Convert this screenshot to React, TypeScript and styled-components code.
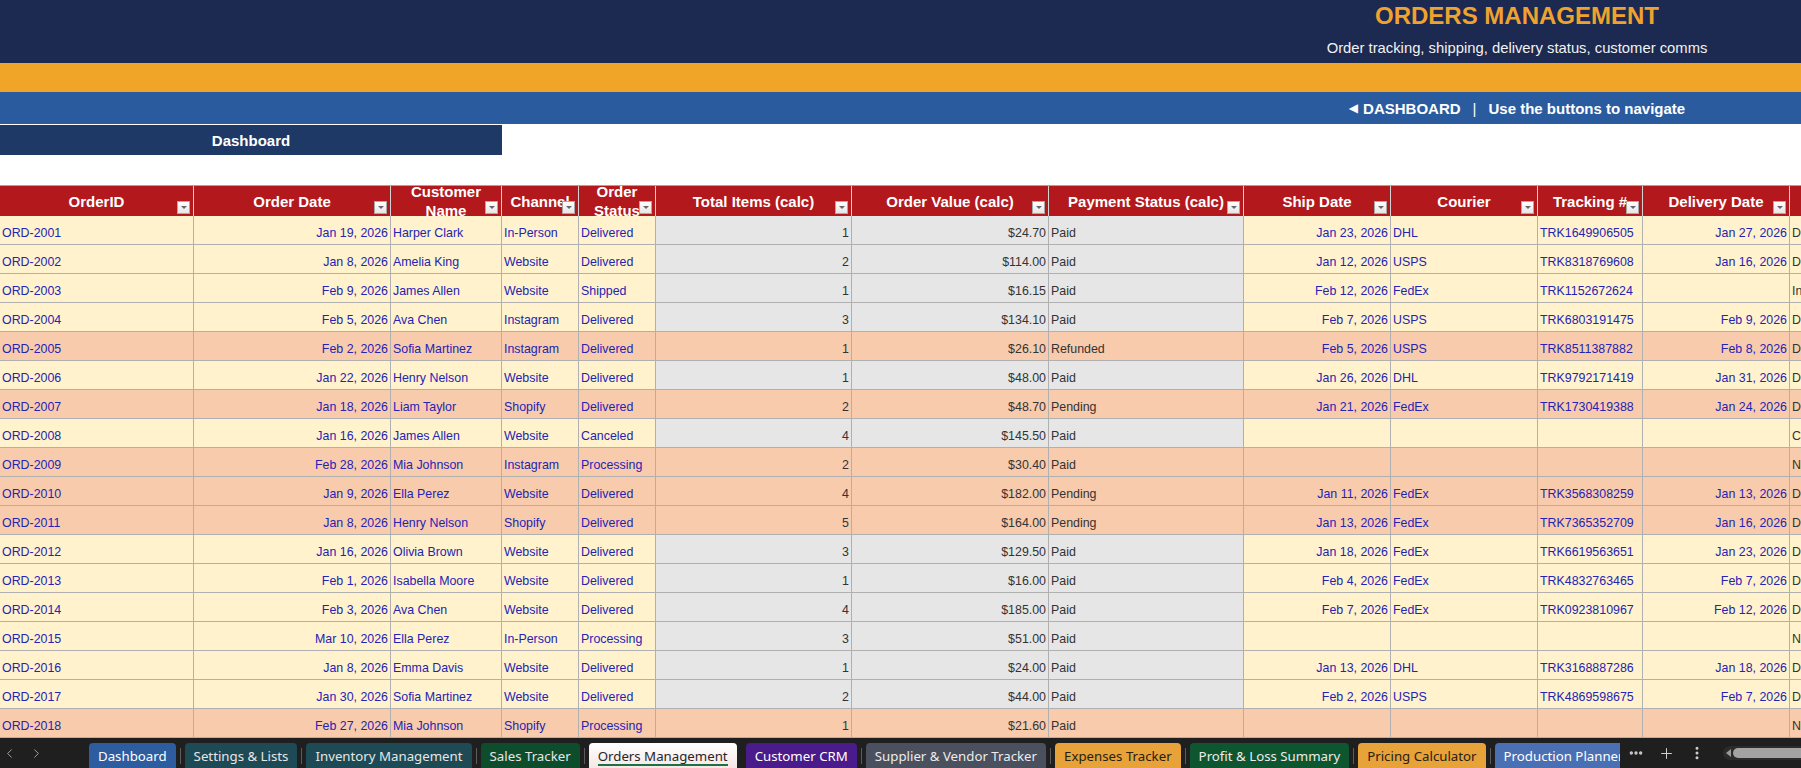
import React from "react";
import styled, { createGlobalStyle } from "styled-components";
import { ChevronLeft, ChevronRight, Plus, Ellipsis, EllipsisVertical } from "lucide-react";

// same column widths for banner, header and rows so merged cells line up
const COLS = "194px 197px 111px 77px 77px 196px 197px 195px 147px 147px 105px 147px 140px";

const GlobalStyle = createGlobalStyle`
  html, body {
    margin: 0;
    padding: 0;
    background: #ffffff;
    overflow: hidden;
  }
  body {
    font-family: "Liberation Sans", Arial, sans-serif;
  }
  * {
    box-sizing: border-box;
  }
`;

const Page = styled.div`
  width: 1801px;
  height: 768px;
  display: flex;
  flex-direction: column;
  overflow: hidden;
`;

const Band = styled.div<{ $bg: string; $h: number }>`
  display: grid;
  grid-template-columns: ${COLS};
  width: max-content;
  height: ${(p) => p.$h}px;
  background: ${(p) => p.$bg};
  flex-shrink: 0;
`;

const Merged = styled.div`
  grid-column: 9 / 13;
  display: flex;
  flex-direction: column;
  align-items: center;
  justify-content: center;
`;

const Title = styled.div`
  height: 32px;
  display: flex;
  align-items: center;
  font-size: 24px;
  font-weight: 700;
  color: #f0a22e;
`;

const Subtitle = styled.div`
  height: 31px;
  display: flex;
  align-items: center;
  font-size: 14.8px;
  color: #f2f2f2;
`;

const NavText = styled.div`
  display: flex;
  align-items: center;
  font-size: 15px;
  font-weight: 700;
  color: #ffffff;
  white-space: nowrap;
`;

const Arrow = styled.span`
  font-family: "DejaVu Sans", sans-serif;
  font-size: 12px;
  margin-right: 5px;
`;

const Pipe = styled.span`
  font-weight: 400;
  margin: 0 12px;
`;

const DashRow = styled(Band)`
  padding-top: 1px;
  margin-bottom: 30px;
`;

const DashCell = styled.div`
  grid-column: 1 / 4;
  background: #1f3966;
  color: #ffffff;
  font-size: 15px;
  font-weight: 700;
  display: flex;
  align-items: center;
  justify-content: center;
`;

const HeadRow = styled.div`
  display: grid;
  grid-template-columns: ${COLS};
  width: max-content;
  height: 31px;
  flex-shrink: 0;
  background: #b3181d;
  border-top: 1px solid #a3a3a3;
`;

const HeadCell = styled.div`
  position: relative;
  overflow: hidden;
  display: flex;
  align-items: center;
  justify-content: center;
  text-align: center;
  padding: 0 2px;
  color: #ffffff;
  font-size: 15px;
  font-weight: 700;
  line-height: 19px;
  border-right: 1px solid #d3d3d3;
`;

const FilterButton = styled.span`
  position: absolute;
  right: 3px;
  bottom: 2px;
  width: 13px;
  height: 13px;
  background: linear-gradient(#ffffff, #e6e6e6);
  border: 1px solid #a8a8a8;
  display: flex;
  align-items: center;
  justify-content: center;

  &::after {
    content: "";
    border-left: 3px solid transparent;
    border-right: 3px solid transparent;
    border-top: 3px solid #666666;
  }
`;

const Row = styled.div`
  display: grid;
  grid-template-columns: ${COLS};
  width: max-content;
  height: 29px;
  flex-shrink: 0;
`;

const Cell = styled.div<{ $bg: string; $fg: string; $right?: boolean }>`
  display: flex;
  align-items: center;
  justify-content: ${(p) => (p.$right ? "flex-end" : "flex-start")};
  padding: 6px 2px 0;
  background: ${(p) => p.$bg};
  color: ${(p) => p.$fg};
  font-size: 12.4px;
  white-space: nowrap;
  overflow: hidden;
  border-right: 1px solid #b0b0b0;
  border-bottom: 1px solid #b0b0b0;
`;

const TabBar = styled.div`
  height: 30px;
  flex-shrink: 0;
  background: #1f1f1f;
  display: flex;
  align-items: flex-end;
  font-family: "Noto Sans", "Open Sans", sans-serif;
`;

const Pager = styled.div`
  width: 89px;
  height: 100%;
  display: flex;
  align-items: center;
  gap: 12px;
  padding-left: 2px;
  color: #a8a8a8;
`;

const Tabs = styled.div`
  width: 1531px;
  height: 100%;
  display: flex;
  align-items: flex-end;
  overflow: hidden;
`;

const Tab = styled.div<{ $bg: string; $fg: string }>`
  height: 25px;
  padding: 0 9px;
  flex-shrink: 0;
  display: flex;
  align-items: center;
  border-radius: 4px 4px 0 0;
  background: ${(p) => p.$bg};
  color: ${(p) => p.$fg};
  font-size: 13.25px;
  white-space: nowrap;
`;

const ActiveTab = styled(Tab)`
  background: linear-gradient(#ffffff, #f7e6e6);
  color: #262626;
  padding-top: 2px;

  & > span {
    border-bottom: 2px solid #1e7145;
    line-height: 16px;
  }
`;

const TabSep = styled.div<{ $hidden?: boolean }>`
  width: 1px;
  height: 16px;
  margin: 0 4px 4px;
  flex-shrink: 0;
  background: ${(p) => (p.$hidden ? "transparent" : "#5c5c5c")};
`;

const Controls = styled.div`
  flex: 1;
  height: 100%;
  display: flex;
  align-items: center;
  color: #d0d0d0;
  padding-left: 8px;
  gap: 14px;
`;

const ScrollTrack = styled.div`
  flex: 1;
  height: 14px;
  margin-left: 4px;
  border-radius: 7px 0 0 7px;
  background: #2b2b2b;
  display: flex;
  align-items: center;
  padding-left: 3px;
  gap: 2px;
`;

const ScrollArrow = styled.span`
  border-top: 4px solid transparent;
  border-bottom: 4px solid transparent;
  border-right: 5px solid #9a9a9a;
`;

const ScrollThumb = styled.div`
  flex: 1;
  height: 10px;
  border-radius: 5px 0 0 5px;
  background: #a3a3a3;
`;

type Order = {
  id: string;
  date: string;
  name: string;
  channel: string;
  status: string;
  items: number;
  value: string;
  pay: string;
  ship: string;
  courier: string;
  trk: string;
  delivered: string;
  track: string;
  hot?: boolean;
};

const orders: Order[] = [
  { id: "ORD-2001", date: "Jan 19, 2026", name: "Harper Clark", channel: "In-Person", status: "Delivered", items: 1, value: "$24.70", pay: "Paid", ship: "Jan 23, 2026", courier: "DHL", trk: "TRK1649906505", delivered: "Jan 27, 2026", track: "Delivered" },
  { id: "ORD-2002", date: "Jan 8, 2026", name: "Amelia King", channel: "Website", status: "Delivered", items: 2, value: "$114.00", pay: "Paid", ship: "Jan 12, 2026", courier: "USPS", trk: "TRK8318769608", delivered: "Jan 16, 2026", track: "Delivered" },
  { id: "ORD-2003", date: "Feb 9, 2026", name: "James Allen", channel: "Website", status: "Shipped", items: 1, value: "$16.15", pay: "Paid", ship: "Feb 12, 2026", courier: "FedEx", trk: "TRK1152672624", delivered: "", track: "In Transit" },
  { id: "ORD-2004", date: "Feb 5, 2026", name: "Ava Chen", channel: "Instagram", status: "Delivered", items: 3, value: "$134.10", pay: "Paid", ship: "Feb 7, 2026", courier: "USPS", trk: "TRK6803191475", delivered: "Feb 9, 2026", track: "Delivered" },
  { id: "ORD-2005", date: "Feb 2, 2026", name: "Sofia Martinez", channel: "Instagram", status: "Delivered", items: 1, value: "$26.10", pay: "Refunded", ship: "Feb 5, 2026", courier: "USPS", trk: "TRK8511387882", delivered: "Feb 8, 2026", track: "Delivered", hot: true },
  { id: "ORD-2006", date: "Jan 22, 2026", name: "Henry Nelson", channel: "Website", status: "Delivered", items: 1, value: "$48.00", pay: "Paid", ship: "Jan 26, 2026", courier: "DHL", trk: "TRK9792171419", delivered: "Jan 31, 2026", track: "Delivered" },
  { id: "ORD-2007", date: "Jan 18, 2026", name: "Liam Taylor", channel: "Shopify", status: "Delivered", items: 2, value: "$48.70", pay: "Pending", ship: "Jan 21, 2026", courier: "FedEx", trk: "TRK1730419388", delivered: "Jan 24, 2026", track: "Delivered", hot: true },
  { id: "ORD-2008", date: "Jan 16, 2026", name: "James Allen", channel: "Website", status: "Canceled", items: 4, value: "$145.50", pay: "Paid", ship: "", courier: "", trk: "", delivered: "", track: "Canceled" },
  { id: "ORD-2009", date: "Feb 28, 2026", name: "Mia Johnson", channel: "Instagram", status: "Processing", items: 2, value: "$30.40", pay: "Paid", ship: "", courier: "", trk: "", delivered: "", track: "Not Shipped", hot: true },
  { id: "ORD-2010", date: "Jan 9, 2026", name: "Ella Perez", channel: "Website", status: "Delivered", items: 4, value: "$182.00", pay: "Pending", ship: "Jan 11, 2026", courier: "FedEx", trk: "TRK3568308259", delivered: "Jan 13, 2026", track: "Delivered", hot: true },
  { id: "ORD-2011", date: "Jan 8, 2026", name: "Henry Nelson", channel: "Shopify", status: "Delivered", items: 5, value: "$164.00", pay: "Pending", ship: "Jan 13, 2026", courier: "FedEx", trk: "TRK7365352709", delivered: "Jan 16, 2026", track: "Delivered", hot: true },
  { id: "ORD-2012", date: "Jan 16, 2026", name: "Olivia Brown", channel: "Website", status: "Delivered", items: 3, value: "$129.50", pay: "Paid", ship: "Jan 18, 2026", courier: "FedEx", trk: "TRK6619563651", delivered: "Jan 23, 2026", track: "Delivered" },
  { id: "ORD-2013", date: "Feb 1, 2026", name: "Isabella Moore", channel: "Website", status: "Delivered", items: 1, value: "$16.00", pay: "Paid", ship: "Feb 4, 2026", courier: "FedEx", trk: "TRK4832763465", delivered: "Feb 7, 2026", track: "Delivered" },
  { id: "ORD-2014", date: "Feb 3, 2026", name: "Ava Chen", channel: "Website", status: "Delivered", items: 4, value: "$185.00", pay: "Paid", ship: "Feb 7, 2026", courier: "FedEx", trk: "TRK0923810967", delivered: "Feb 12, 2026", track: "Delivered" },
  { id: "ORD-2015", date: "Mar 10, 2026", name: "Ella Perez", channel: "In-Person", status: "Processing", items: 3, value: "$51.00", pay: "Paid", ship: "", courier: "", trk: "", delivered: "", track: "Not Shipped" },
  { id: "ORD-2016", date: "Jan 8, 2026", name: "Emma Davis", channel: "Website", status: "Delivered", items: 1, value: "$24.00", pay: "Paid", ship: "Jan 13, 2026", courier: "DHL", trk: "TRK3168887286", delivered: "Jan 18, 2026", track: "Delivered" },
  { id: "ORD-2017", date: "Jan 30, 2026", name: "Sofia Martinez", channel: "Website", status: "Delivered", items: 2, value: "$44.00", pay: "Paid", ship: "Feb 2, 2026", courier: "USPS", trk: "TRK4869598675", delivered: "Feb 7, 2026", track: "Delivered" },
  { id: "ORD-2018", date: "Feb 27, 2026", name: "Mia Johnson", channel: "Shopify", status: "Processing", items: 1, value: "$21.60", pay: "Paid", ship: "", courier: "", trk: "", delivered: "", track: "Not Shipped", hot: true },
];

const headers = [
  "OrderID",
  "Order Date",
  "Customer Name",
  "Channel",
  "Order Status",
  "Total Items (calc)",
  "Order Value (calc)",
  "Payment Status (calc)",
  "Ship Date",
  "Courier",
  "Tracking #",
  "Delivery Date",
  "Tracking Status",
];

const tabs = [
  { label: "Dashboard", bg: "#2d5c9f", fg: "#ffffff" },
  { label: "Settings & Lists", bg: "#1d4a54", fg: "#e6e6e6" },
  { label: "Inventory Management", bg: "#1d4a54", fg: "#e6e6e6" },
  { label: "Sales Tracker", bg: "#0e4d2c", fg: "#e6e6e6" },
  { label: "Orders Management", bg: "", fg: "", active: true },
  { label: "Customer CRM", bg: "#4a1b8a", fg: "#ffffff" },
  { label: "Supplier & Vendor Tracker", bg: "#4a505e", fg: "#ececec" },
  { label: "Expenses Tracker", bg: "#e7a23a", fg: "#2a2010" },
  { label: "Profit & Loss Summary", bg: "#0e5630", fg: "#ececec" },
  { label: "Pricing Calculator", bg: "#e7a23a", fg: "#2a2010" },
  { label: "Production Planner", bg: "#4a6fb3", fg: "#ffffff" },
];

const YELLOW = "#fff2cc";
const GREY = "#e6e6e6";
const PEACH = "#f8cbad";
const BLUE_TEXT = "#2424b4";
const DARK_TEXT = "#333333";

const OrderRow = ({ o }: { o: Order }) => {
  const input = o.hot ? PEACH : YELLOW;
  const calc = o.hot ? PEACH : GREY;
  return (
    <Row>
      <Cell $bg={input} $fg={BLUE_TEXT}>{o.id}</Cell>
      <Cell $bg={input} $fg={BLUE_TEXT} $right>{o.date}</Cell>
      <Cell $bg={input} $fg={BLUE_TEXT}>{o.name}</Cell>
      <Cell $bg={input} $fg={BLUE_TEXT}>{o.channel}</Cell>
      <Cell $bg={input} $fg={BLUE_TEXT}>{o.status}</Cell>
      <Cell $bg={calc} $fg={DARK_TEXT} $right>{o.items}</Cell>
      <Cell $bg={calc} $fg={DARK_TEXT} $right>{o.value}</Cell>
      <Cell $bg={calc} $fg={DARK_TEXT}>{o.pay}</Cell>
      <Cell $bg={input} $fg={BLUE_TEXT} $right>{o.ship}</Cell>
      <Cell $bg={input} $fg={BLUE_TEXT}>{o.courier}</Cell>
      <Cell $bg={input} $fg={BLUE_TEXT}>{o.trk}</Cell>
      <Cell $bg={input} $fg={BLUE_TEXT} $right>{o.delivered}</Cell>
      <Cell $bg={input} $fg={DARK_TEXT}>{o.track}</Cell>
    </Row>
  );
};

export default function App() {
  return (
    <>
      <GlobalStyle />
      <Page>
        <Band $bg="#1c2951" $h={63}>
          <Merged>
            <Title>ORDERS MANAGEMENT</Title>
            <Subtitle>Order tracking, shipping, delivery status, customer comms</Subtitle>
          </Merged>
        </Band>
        <Band $bg="#f0a428" $h={29} />
        <Band $bg="#2a5b9f" $h={32}>
          <Merged>
            <NavText>
              <Arrow>◀</Arrow>DASHBOARD<Pipe>|</Pipe>Use the buttons to navigate
            </NavText>
          </Merged>
        </Band>
        <DashRow $bg="#ffffff" $h={31}>
          <DashCell>Dashboard</DashCell>
        </DashRow>

        <HeadRow>
          {headers.map((h) => (
            <HeadCell key={h}>
              {h}
              <FilterButton />
            </HeadCell>
          ))}
        </HeadRow>
        {orders.map((o) => (
          <OrderRow key={o.id} o={o} />
        ))}

        <TabBar>
          <Pager>
            <ChevronLeft size={15} strokeWidth={1.5} />
            <ChevronRight size={15} strokeWidth={1.5} />
          </Pager>
          <Tabs>
            {tabs.map((t, i) => (
              <React.Fragment key={t.label}>
                {i > 0 && <TabSep $hidden={tabs[i - 1].active} />}
                {t.active ? (
                  <ActiveTab $bg="" $fg="">
                    <span>{t.label}</span>
                  </ActiveTab>
                ) : (
                  <Tab $bg={t.bg} $fg={t.fg}>{t.label}</Tab>
                )}
              </React.Fragment>
            ))}
          </Tabs>
          <Controls>
            <Ellipsis size={16} strokeWidth={3} />
            <Plus size={17} strokeWidth={1.4} />
            <EllipsisVertical size={16} strokeWidth={2.5} />
            <ScrollTrack>
              <ScrollArrow />
              <ScrollThumb />
            </ScrollTrack>
          </Controls>
        </TabBar>
      </Page>
    </>
  );
}
